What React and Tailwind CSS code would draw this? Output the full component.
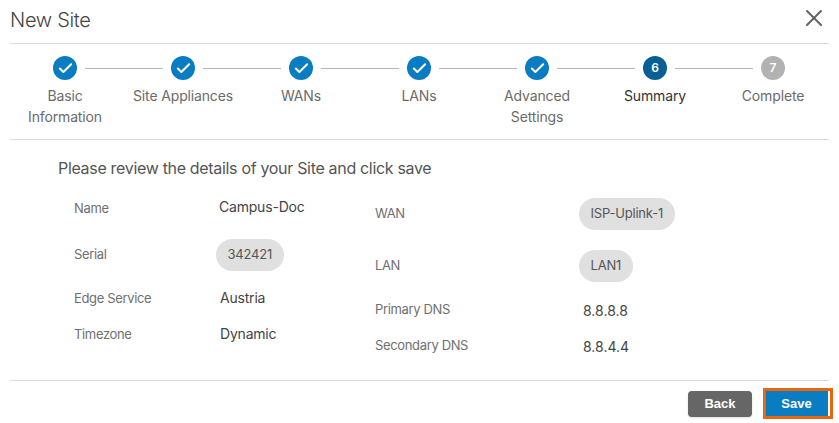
import { X, Check } from "lucide-react";

const steps = [
  { label: "Basic Information", state: "done" },
  { label: "Site Appliances", state: "done" },
  { label: "WANs", state: "done" },
  { label: "LANs", state: "done" },
  { label: "Advanced Settings", state: "done" },
  { label: "Summary", state: "active", num: 6 },
  { label: "Complete", state: "todo", num: 7 },
];

function Step({ step, index }) {
  return (
    <div className="w-[118px] flex flex-col items-center relative">
      {index < steps.length - 1 && (
        <div className="absolute top-[11.5px] left-[79px] w-[78px] h-px bg-[#b5b5b5]" />
      )}
      {step.state === "done" && (
        <div className="w-6 h-6 rounded-full bg-[#0a7cc1] flex items-center justify-center">
          <Check size={17} strokeWidth={2.8} className="text-white" />
        </div>
      )}
      {step.state === "active" && (
        <div className="w-6 h-6 rounded-full bg-[#085f94] flex items-center justify-center text-white text-[12px] font-semibold">
          {step.num}
        </div>
      )}
      {step.state === "todo" && (
        <div className="w-6 h-6 rounded-full bg-[#b2b2b2] flex items-center justify-center text-white text-[12px] font-semibold">
          {step.num}
        </div>
      )}
      <div
        className={
          "mt-[5px] max-w-[104px] text-[14px] leading-[21px] text-center tracking-[-0.15px] " +
          (step.state === "active" ? "text-[#333333]" : "text-[#6b6b6b]")
        }
      >
        {step.label}
      </div>
    </div>
  );
}

function Row({ label, children, className, labelWidth, tall }) {
  return (
    <div className={"flex items-center " + (tall ? "h-8 " : "h-6 ") + className}>
      <div className={"text-[13px] tracking-[-0.35px] text-[#6f6f6f] " + labelWidth}>{label}</div>
      {children}
    </div>
  );
}

function Pill({ children }) {
  return (
    <span className="h-8 px-[11.5px] rounded-2xl bg-[#e0e0e0] text-[13px] tracking-[-0.2px] text-[#555555] flex items-center">
      {children}
    </span>
  );
}

export default function App() {
  return (
    <div className="w-[839px] h-[423px] bg-white overflow-hidden font-['Inter',sans-serif]">
      <div className="mx-[10px] h-[44px] border-b border-[#dddddd] flex items-center justify-between">
        <h2 className="text-[20px] font-light tracking-[-0.3px] text-[#444444] -mt-1">New Site</h2>
        <X size={28} strokeWidth={1.8} className="text-[#666666] -mt-[7px] mr-px" />
      </div>

      <div className="h-[95px] pl-[6px] pt-[12px] flex items-start">
        {steps.map((s, i) => (
          <Step key={s.label} step={s} index={i} />
        ))}
      </div>

      <div className="mx-[10px] h-[242px] border-y border-[#dddddd] pt-[18px]">
        <p className="ml-[48px] text-[16px] leading-5 tracking-[-0.32px] text-[#555555]">
          Please review the details of your Site and click save
        </p>
        <div className="flex">
          <div className="ml-[64px] w-[301px] pt-[19px]">
            <Row label="Name" labelWidth="w-[145px]" className="">
              <span className="text-[14px] tracking-[-0.2px] text-[#444444] -mt-[6px]">Campus-Doc</span>
            </Row>
            <Row label="Serial" labelWidth="w-[142px]" className="mt-[18px]" tall>
              <Pill>342421</Pill>
            </Row>
            <Row label="Edge Service" labelWidth="w-[146px]" className="mt-4">
              <span className="text-[14px] tracking-[-0.2px] text-[#444444] -mt-[4px]">Austria</span>
            </Row>
            <Row label="Timezone" labelWidth="w-[146px]" className="mt-3">
              <span className="text-[14px] tracking-[-0.2px] text-[#444444] -mt-[4px]">Dynamic</span>
            </Row>
          </div>
          <div className="pt-[20px]">
            <Row label="WAN" labelWidth="w-[204px]" className="" tall>
              <Pill>ISP-Uplink-1</Pill>
            </Row>
            <Row label="LAN" labelWidth="w-[204px]" className="mt-5" tall>
              <Pill>LAN1</Pill>
            </Row>
            <Row label="Primary DNS" labelWidth="w-[208px]" className="mt-4">
              <span className="text-[14px] text-[#444444] mt-[1px]">8.8.8.8</span>
            </Row>
            <Row label="Secondary DNS" labelWidth="w-[208px]" className="mt-3">
              <span className="text-[14px] text-[#444444] mt-[1px]">8.8.4.4</span>
            </Row>
          </div>
        </div>
      </div>

      <div className="flex justify-end items-start gap-[11px] pr-[6px] pt-[7px]">
        <button className="w-16 h-[26px] mt-[3px] rounded bg-[#666666] text-white text-[13px] font-bold font-['Liberation_Sans',sans-serif] shadow">
          Back
        </button>
        <button className="w-[70px] h-[31px] border-[3px] border-[#e8660d] pr-[2px]">
          <span className="flex items-center justify-center w-full h-full pr-px bg-[#0a7cc1] text-white text-[13px] font-bold font-['Liberation_Sans',sans-serif]">
            Save
          </span>
        </button>
      </div>
    </div>
  );
}
